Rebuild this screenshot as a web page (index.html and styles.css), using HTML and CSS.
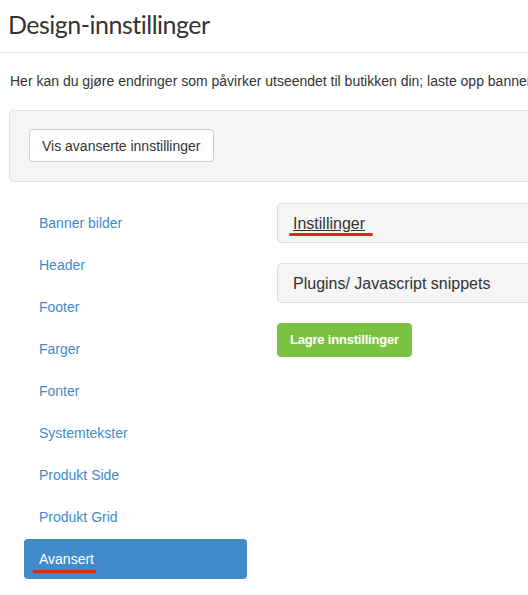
FILE: index.html
```html
<!DOCTYPE html>
<html lang="no">
<head>
<meta charset="utf-8">
<title>Design-innstillinger</title>
<link rel="stylesheet" href="styles.css">
</head>
<body>
<div class="header">
  <h1 class="title">Design-innstillinger</h1>
</div>
<div class="page">
  <p class="intro">Her kan du gjøre endringer som påvirker utseendet til butikken din; laste opp bannere, endre farger, fonter og tekster.</p>
  <div class="well">
    <button class="btn-default" type="button">Vis avanserte innstillinger</button>
  </div>
  <div class="row">
    <ul class="nav">
      <li><a href="#">Banner bilder</a></li>
      <li><a href="#">Header</a></li>
      <li><a href="#">Footer</a></li>
      <li><a href="#">Farger</a></li>
      <li><a href="#">Fonter</a></li>
      <li><a href="#">Systemtekster</a></li>
      <li><a href="#">Produkt Side</a></li>
      <li><a href="#">Produkt Grid</a></li>
      <li class="active"><a href="#"><span class="mark mark-nav">Avansert</span></a></li>
    </ul>
    <div class="main">
      <div class="panel">
        <a class="panel-title link" href="#"><span class="mark mark-panel">Instillinger</span></a>
      </div>
      <div class="panel">
        <span class="panel-title">Plugins/ Javascript snippets</span>
      </div>
      <button class="btn-success" type="button">Lagre innstillinger</button>
    </div>
  </div>
</div>
</body>
</html>
```
FILE: styles.css
```css
html, body {
  margin: 0;
  padding: 0;
  overflow: hidden;
  background: #fff;
}
body {
  font-family: "Liberation Sans", Arial, sans-serif;
  font-size: 14px;
  line-height: 20px;
  color: #333;
  width: 528px;
}
.header {
  width: 1040px;
  border-bottom: 1px solid #e6e6e6;
  height: 53px;
  box-sizing: border-box;
}
.title {
  margin: 0;
  padding: 7px 0 0 8px;
  font-family: Lato, "Open Sans", sans-serif;
  font-weight: 400;
  font-size: 25px;
  letter-spacing: -0.5px;
  line-height: 34px;
  color: #333;
  white-space: nowrap;
}
.page {
  width: 1012px;
  padding-left: 9px;
}
.intro {
  margin: 18px 0 0 1px;
  white-space: nowrap;
}
.well {
  margin-top: 19px;
  background: #f5f5f5;
  border: 1px solid #e3e3e3;
  border-radius: 4px;
  padding: 18px 19px 19px;
}
.btn-default {
  font-family: "Liberation Sans", Arial, sans-serif;
  font-size: 14px;
  line-height: 20px;
  color: #333;
  background: #fff;
  border: 1px solid #ccc;
  border-radius: 4px;
  padding: 6px 12px 5px;
  margin: 0;
}
.row {
  display: flex;
  gap: 30px;
  margin-top: 21px;
  padding-left: 15px;
}
.nav {
  list-style: none;
  margin: 0;
  padding: 0;
  width: 223px;
  flex: none;
}
.nav li + li {
  margin-top: 2px;
}
.nav a {
  display: block;
  padding: 10px 15px;
  border-radius: 4px;
  color: #428bca;
  text-decoration: none;
}
.nav .active a {
  background: #428bca;
  color: #fff;
}
.mark {
  position: relative;
}
.mark::after {
  content: "";
  position: absolute;
  height: 3px;
  border-radius: 2px;
  background: #e2261c;
}
.mark-nav::after {
  left: -6px;
  right: -2px;
  bottom: -6px;
}
.mark-panel::after {
  left: -4px;
  right: -8px;
  bottom: -4px;
}
.main {
  flex: 1;
  display: flex;
  flex-direction: column;
  align-items: flex-start;
  gap: 20px;
}
.panel {
  align-self: stretch;
  background: #f5f5f5;
  border: 1px solid #ddd;
  border-radius: 4px;
  padding: 10px 15px;
  height: 18px;
}
.panel-title {
  font-size: 16px;
  line-height: 18px;
  color: #333;
}
.link {
  text-decoration: underline;
}
.btn-success {
  font-family: "Liberation Sans", Arial, sans-serif;
  font-size: 13px;
  font-weight: 700;
  letter-spacing: -0.2px;
  line-height: 20px;
  color: #fff;
  background: #7cc242;
  border: 1px solid #79bf40;
  border-radius: 4px;
  padding: 6px 12px;
  margin: 0;
}
```
